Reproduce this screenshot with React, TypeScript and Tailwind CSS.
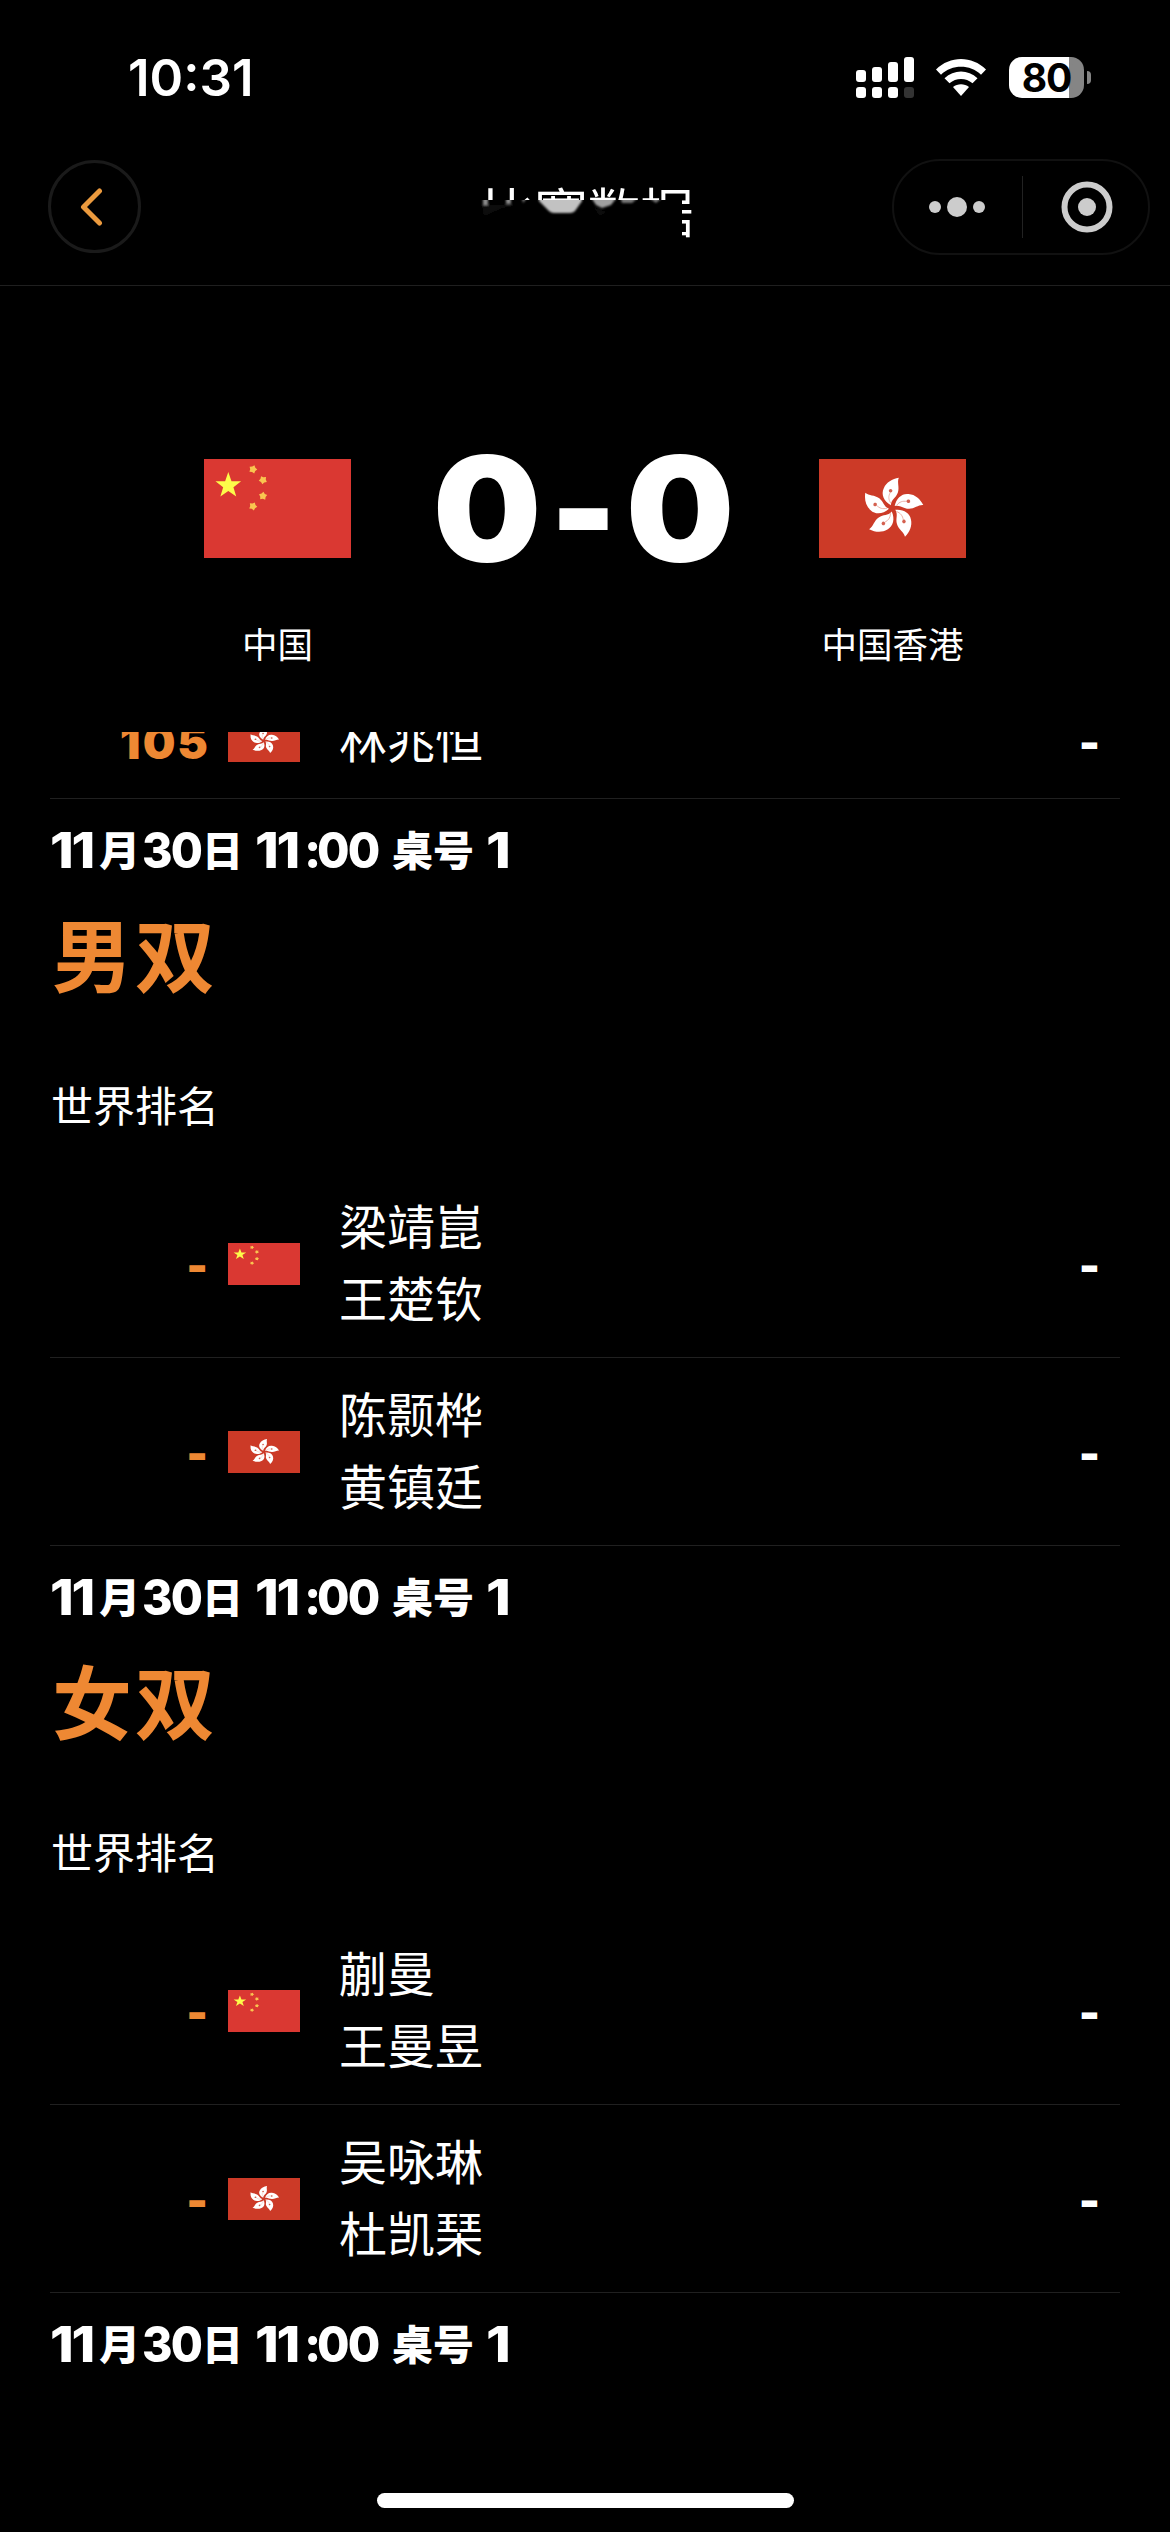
import { ReactNode } from "react";
import clsx from "clsx";

type Team = "CHN" | "HKG";

type Entry = {
  rank: string;
  team: Team;
  players: string[];
  score: string;
};

type Match = {
  title: string;
  entries: Entry[];
};

const matches: Match[] = [
  {
    title: "男双",
    entries: [
      { rank: "-", team: "CHN", players: ["梁靖崑", "王楚钦"], score: "-" },
      { rank: "-", team: "HKG", players: ["陈颢桦", "黄镇廷"], score: "-" },
    ],
  },
  {
    title: "女双",
    entries: [
      { rank: "-", team: "CHN", players: ["蒯曼", "王曼昱"], score: "-" },
      { rank: "-", team: "HKG", players: ["吴咏琳", "杜凯琹"], score: "-" },
    ],
  },
];

const starPoints = (cx: number, cy: number, r: number, turn = 0, inner = 0.4) =>
  Array.from({ length: 10 }, (_, i) => {
    const radius = i % 2 === 0 ? r : r * inner;
    const angle = ((i * 36 - 90 + turn) * Math.PI) / 180;
    return `${cx + radius * Math.cos(angle)},${cy + radius * Math.sin(angle)}`;
  }).join(" ");

const Flag = ({ team, className }: { team: Team; className: string }) => {
  if (team === "CHN") {
    return (
      <svg viewBox="0 0 147 99" preserveAspectRatio="none" className={className}>
        <rect width="147" height="99" fill="#da3832" />
        <polygon points={starPoints(24.3, 26.5, 13.5)} fill="#fdfb4a" />
        <g fill="#f9c550">
          <polygon points={starPoints(49, 10.3, 4.3, 20, 0.65)} />
          <polygon points={starPoints(59, 21, 4.3, 45, 0.65)} />
          <polygon points={starPoints(59, 37, 4.3, 5, 0.65)} />
          <polygon points={starPoints(49, 47.3, 4.3, 25, 0.65)} />
        </g>
      </svg>
    );
  }

  return (
    <svg viewBox="0 0 147 99" preserveAspectRatio="none" className={className}>
      <rect width="147" height="99" fill="#cc3a27" />
      <g transform="translate(73.3 49.3)">
        {[0, 72, 144, 216, 288].map((angle) => (
          <g key={angle} transform={`rotate(${angle})`}>
            <path
              d="M-1.5 -3C-8.5 -7 -11.5 -14 -8.5 -20C-6 -26 0 -29.5 6.5 -30.5C4.5 -26 7.5 -21 5.5 -15.5C3.5 -10 -1 -9 -1.5 -3Z"
              fill="#fff"
            />
            <path d="M-1.5 -5C-4 -9 -4 -12 -2 -16" stroke="#e9a89d" strokeWidth="0.8" fill="none" />
            <circle cx="-1.7" cy="-17.5" r="1.8" fill="#d4604f" />
          </g>
        ))}
      </g>
    </svg>
  );
};

const StatusBar = () => (
  <div className="flex h-[154px] items-start justify-between pl-[128px] pr-[79px]">
    <div className="mt-[47px] font-['Inter'] text-[51px] leading-[62px] font-semibold">10:31</div>
    <div className="mt-[57px] flex items-start">
      <svg width="58" height="41" viewBox="0 0 58 41" fill="#fff">
        <rect x="0" y="13" width="10" height="12" rx="3" />
        <rect x="16" y="10" width="10" height="15" rx="3" />
        <rect x="32" y="5" width="10" height="20" rx="3" />
        <rect x="48" y="0" width="10" height="25" rx="3" />
        <rect x="0" y="30" width="10" height="11" rx="3" />
        <rect x="16" y="30" width="10" height="11" rx="3" />
        <rect x="32" y="30" width="10" height="11" rx="3" />
        <rect x="48" y="30" width="10" height="11" rx="3" fill="#333" />
      </svg>
      <svg width="50" height="38" viewBox="0 0 50 38" fill="#fff" className="mt-[2px] ml-[22px]">
        <path d="M0 10.5C14 -3.5 36 -3.5 50 10.5L45 15.8C34 5.2 16 5.2 5 15.8Z" />
        <path d="M8.5 19.2C18 10.3 32 10.3 41.5 19.2L36.5 24.3C30 18.4 20 18.4 13.5 24.3Z" />
        <path d="M17 28C21.5 24.2 28.5 24.2 33 28L25 37Z" />
      </svg>
      <div className="ml-[23px] flex h-[41px] w-[75px] items-center justify-center rounded-[13px] bg-linear-to-r from-white from-80% to-[#858585] to-80% font-['Inter'] text-[39px] leading-none font-bold tracking-[-1px] text-black">
        80
      </div>
      <div className="mt-[14px] ml-[3px] h-[13px] w-[4px] rounded-r-full bg-[#858585]" />
    </div>
  </div>
);

const NavBar = () => (
  <div className="flex h-[132px] items-start justify-between border-b border-[#1f1f1f] pr-[20px] pl-[48px]">
    <button className="mt-[6px] flex size-[93px] items-center justify-center rounded-full border-3 border-[#1a1a1a]">
      <svg width="24" height="40" viewBox="0 0 24 40" fill="none" className="-ml-[7px]">
        <path d="M20.5 4L4.5 20L20.5 36" stroke="#eb9a3e" strokeWidth="5" strokeLinecap="round" strokeLinejoin="round" />
      </svg>
    </button>
    <div className="relative mt-[20px] ml-[142px] h-[72px] text-[53px] leading-[72px]">
      比赛数据
      {/* smudge left by the blurred strip under the title */}
      <div className="absolute top-[26px] -left-[4px] h-[44px] w-[204px] overflow-hidden bg-black">
        <svg width="204" height="44" viewBox="0 0 204 44">
          <defs>
            <filter id="soft" x="-20%" y="-20%" width="140%" height="140%">
              <feGaussianBlur stdDeviation="1.2" />
            </filter>
          </defs>
          <g filter="url(#soft)">
            <path d="M61 -6H104V1L97 11Q95 13 92 13H76Q73 13 71 11L61 1Z" fill="#c2c2c2" />
            <path d="M5 -4H10V5H5Z M28 -4H33V4H28Z M44 -4H50L45 3Z" fill="#8a8a8a" />
            <path d="M112 -4H140L133 5L124 8L118 5Z" fill="#a0a0a0" />
            <path d="M142 -4H162L154 3L144 3Z M168 -4H186L178 3Z" fill="#777" />
            <path d="M4 5H40L24 8L6 16Z M116 8L128 12L122 16Z" fill="#101010" />
          </g>
        </svg>
      </div>
    </div>
    <div className="mt-[5px] flex h-[96px] w-[258px] items-center rounded-full border-2 border-[#111]">
      <svg width="128" height="60" viewBox="0 0 128 60" fill="#ccc">
        <circle cx="41" cy="30" r="6" />
        <circle cx="63" cy="30" r="10" />
        <circle cx="85" cy="30" r="6" />
      </svg>
      <div className="h-[62px] w-px bg-[#222]" />
      <svg width="125" height="60" viewBox="0 0 125 60">
        <circle cx="64" cy="30" r="22.5" fill="none" stroke="#ccc" strokeWidth="6" />
        <circle cx="64" cy="30" r="9" fill="#ccc" />
      </svg>
    </div>
  </div>
);

const TeamBadge = ({ team, name }: { team: Team; name: string }) => (
  <div className="flex w-[147px] flex-col items-center">
    <Flag team={team} className="h-[99px] w-[147px]" />
    <div className="mt-[58px] text-[35.5px] leading-[54px] whitespace-nowrap">{name}</div>
  </div>
);

const Scoreboard = () => (
  <div className="flex h-[446px] items-start justify-between px-[204px] pt-[173px]">
    <TeamBadge team="CHN" name="中国" />
    <div className="mt-[-51px] flex h-[200px] w-[300px] items-center justify-center pr-[4px] font-['Inter'] text-[147px] leading-none font-black">
      <span className="flex w-[98px] scale-x-104 justify-center">0</span>
      <span className="flex w-[95px] scale-x-96 justify-center">-</span>
      <span className="flex w-[98px] scale-x-104 justify-center">0</span>
    </div>
    <TeamBadge team="HKG" name="中国香港" />
  </div>
);

const EntryRow = ({ entry }: { entry: Entry }) => (
  <div className="flex shrink-0 items-center border-b border-[#202020] pt-[18px] pr-[20px] pb-[25px]">
    <div className="mt-[10px] w-[160px] text-right font-['Inter'] text-[46px] leading-none font-black tracking-[2px] text-[#ee8833]">
      {entry.rank}
    </div>
    <Flag team={entry.team} className="mt-[7px] ml-[18px] h-[42px] w-[72px]" />
    <div className="ml-[39px] grow text-[48px] leading-[72px]">
      {entry.players.map((player) => (
        <div key={player}>{player}</div>
      ))}
    </div>
    <div className="mt-[10px] font-['Inter'] text-[45px] leading-none font-black">{entry.score}</div>
  </div>
);

const Cjk = ({ children, className }: { children: ReactNode; className: string }) => (
  <span
    className={clsx(
      "-mt-[6px] inline-block font-['Noto_Sans_CJK_SC'] text-[41px] font-black tracking-normal",
      className,
    )}
  >
    {children}
  </span>
);

const MatchTime = () => (
  <div className="flex h-[104px] items-center font-['Inter'] text-[49px] leading-[60px] font-extrabold tracking-[-2px] whitespace-pre">
    <span className="w-[49px] origin-left scale-x-110">11</span>
    <Cjk className="w-[43px]">月</Cjk>
    <span className="w-[60px] origin-left scale-x-95">30</span>
    <Cjk className="w-[53px]">日</Cjk>
    <span className="w-[49px] origin-left scale-x-110">11</span>
    <span className="w-[13px]">:</span>
    <span className="w-[75px] origin-left scale-x-96">00</span>
    <Cjk className="w-[94px]">桌号</Cjk>
    <span className="origin-left scale-x-115">1</span>
  </div>
);

const MatchSection = ({ match }: { match: Match }) => (
  <section className="flex shrink-0 flex-col">
    <MatchTime />
    <h2 className="-mt-[7px] h-[117px] pl-[2px] text-[80px] leading-[110px] font-bold tracking-[3px] text-[#ee8833]">
      {match.title}
    </h2>
    <div className="mt-[55px] h-[102px] pt-[6px] pl-px text-[42px] leading-[60px]">世界排名</div>
    {match.entries.map((entry) => (
      <EntryRow key={entry.team} entry={entry} />
    ))}
  </section>
);

const App = () => {
  return (
    <div className="flex h-[2532px] w-[1170px] flex-col overflow-hidden bg-black font-['Noto_Sans_CJK_SC',sans-serif] text-white">
      <StatusBar />
      <NavBar />
      <Scoreboard />
      <main className="flex h-[1761px] flex-col overflow-hidden px-[50px]">
        {/* list is scrolled, only the lower part of this row is left */}
        <div className="-mt-[49px] shrink-0">
          <EntryRow entry={{ rank: "105", team: "HKG", players: ["林兆恒"], score: "-" }} />
        </div>
        {matches.map((match) => (
          <MatchSection key={match.title} match={match} />
        ))}
        <MatchTime />
      </main>
      <div className="mx-auto h-[15px] w-[417px] rounded-full bg-white" />
    </div>
  );
};

export default App;
